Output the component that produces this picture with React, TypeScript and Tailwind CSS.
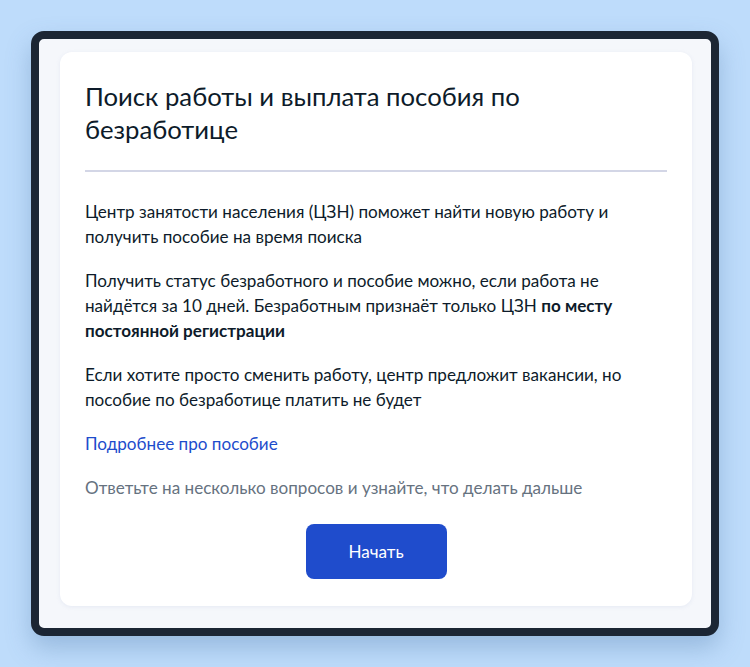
import React from "react";

export default function App() {
  return (
    <div
      className="w-[750px] h-[667px] bg-[#bedcfb] pt-[31px] pl-[31px]"
      style={{ fontFamily: "Lato, 'Noto Sans', sans-serif" }}
    >
      <div className="w-[688px] h-[605px] rounded-[13px] border-[8px] border-[#1c2634] bg-[#f5f7fb] pt-[13px] pl-[21px] pr-[19px] pb-[22px] shadow-[0_12px_24px_rgba(80,120,170,0.35)]">
        <div className="h-full rounded-[12px] bg-white px-[25px] pt-[28px] shadow-[0_1px_4px_rgba(150,160,200,0.15)] flex flex-col">
          <h1 className="text-[25.7px] leading-[33px] text-[#0d1b2a] font-normal">
            Поиск работы и выплата пособия по безработице
          </h1>
          <div className="mt-[24px] h-[2px] bg-[#d3d6e6]" />
          <div className="mt-[27px] text-[17.1px] leading-[25px] text-[#0d1b2a] flex flex-col gap-[19px]">
            <p>
              Центр занятости населения (ЦЗН) поможет найти новую работу и получить пособие на время поиска
            </p>
            <p>
              Получить статус безработного и пособие можно, если работа не найдётся за 10 дней. Безработным признаёт только ЦЗН{" "}
              <span className="font-bold">по месту постоянной регистрации</span>
            </p>
            <p>
              Если хотите просто сменить работу, центр предложит вакансии, но пособие по безработице платить не будет
            </p>
            <p className="text-[#1d4ccc]">Подробнее про пособие</p>
            <p className="text-[#66727f]">Ответьте на несколько вопросов и узнайте, что делать дальше</p>
          </div>
          <div className="mt-[24px] flex justify-center">
            <button className="w-[141px] h-[55px] rounded-[8px] bg-[#1f4ccc] text-white text-[17.1px]">
              Начать
            </button>
          </div>
        </div>
      </div>
    </div>
  );
}
